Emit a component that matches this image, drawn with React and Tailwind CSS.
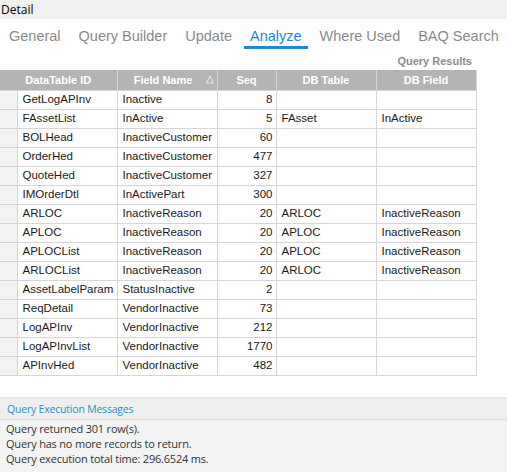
const rows = [
  ["GetLogAPInv", "Inactive", "8", "", ""],
  ["FAssetList", "InActive", "5", "FAsset", "InActive"],
  ["BOLHead", "InactiveCustomer", "60", "", ""],
  ["OrderHed", "InactiveCustomer", "477", "", ""],
  ["QuoteHed", "InactiveCustomer", "327", "", ""],
  ["IMOrderDtl", "InActivePart", "300", "", ""],
  ["ARLOC", "InactiveReason", "20", "ARLOC", "InactiveReason"],
  ["APLOC", "InactiveReason", "20", "APLOC", "InactiveReason"],
  ["APLOCList", "InactiveReason", "20", "APLOC", "InactiveReason"],
  ["ARLOCList", "InactiveReason", "20", "ARLOC", "InactiveReason"],
  ["AssetLabelParam", "StatusInactive", "2", "", ""],
  ["ReqDetail", "VendorInactive", "73", "", ""],
  ["LogAPInv", "VendorInactive", "212", "", ""],
  ["LogAPInvList", "VendorInactive", "1770", "", ""],
  ["APInvHed", "VendorInactive", "482", "", ""],
];

const tabs = ["General", "Query Builder", "Update", "Analyze", "Where Used", "BAQ Search"];

export default function App() {
  return (
    <div className="w-[507px] h-[472px] bg-white flex flex-col overflow-hidden font-['Liberation_Sans',Arial,sans-serif]">
      <div className="h-[19px] bg-[#f0f0f0] px-[1px] text-[12px] leading-[19px] text-black font-['Open_Sans',sans-serif]">
        Detail
      </div>

      <div className="flex gap-[6px] pl-[3px] pt-[6px] h-[30px] whitespace-nowrap">
        {tabs.map((t) => (
          <div
            key={t}
            className={`px-[6px] text-[14.5px] leading-[22px] h-[24px] ${
              t === "Analyze"
                ? "text-[#1e88d8] border-b-[3px] border-[#1e88d8]"
                : "text-[#8a8a8a]"
            }`}
          >
            {t}
          </div>
        ))}
      </div>

      <div className="w-[475px] flex justify-end pr-[3px] pt-[3px] h-[21px] items-center">
        <span className="text-[11px] font-bold text-[#8c8c8c]">Query Results</span>
      </div>

      <table className="border-collapse text-[11.5px] text-[#1a1a1a] table-fixed w-[476px]">
        <colgroup>
          <col className="w-[17px]" />
          <col className="w-[100px]" />
          <col className="w-[100px]" />
          <col className="w-[59px]" />
          <col className="w-[100px]" />
          <col className="w-[100px]" />
        </colgroup>
        <thead>
          <tr className="h-[20px] bg-[#b4b4b4] text-white font-bold text-[11px]">
            <th colSpan={2} className="border-r border-[#d6d6d6] font-bold">DataTable ID</th>
            <th className="border-r border-[#d6d6d6] font-bold relative pr-[8px]">
              Field Name
              <span className="absolute right-[3px] top-[1px] text-[10px] font-normal">△</span>
            </th>
            <th className="border-r border-[#d6d6d6] font-bold">Seq</th>
            <th className="border-r border-[#d6d6d6] font-bold">DB Table</th>
            <th className="border-r border-[#d6d6d6] font-bold">DB Field</th>
          </tr>
        </thead>
        <tbody>
          {rows.map((r) => (
            <tr key={r[0]} className="h-[19px]">
              <td className="bg-[#f3f3f3] border border-[#d6d6d6] border-l-0"></td>
              <td className="border border-[#d6d6d6] px-[5px] whitespace-nowrap overflow-hidden">{r[0]}</td>
              <td className="border border-[#d6d6d6] px-[5px] whitespace-nowrap overflow-hidden">{r[1]}</td>
              <td className="border border-[#d6d6d6] px-[3px] text-right">{r[2]}</td>
              <td className="border border-[#d6d6d6] px-[5px]">{r[3]}</td>
              <td className="border border-[#d6d6d6] px-[5px]">{r[4]}</td>
            </tr>
          ))}
        </tbody>
      </table>

      <div className="flex-1" />

      <div className="h-[75px] border-t-2 border-[#e8e8e8] flex flex-col font-['Open_Sans',sans-serif]">
        <div className="h-[21px] bg-[#efefef] border-b border-[#dadada] px-[7px] text-[10.5px] tracking-[-0.2px] leading-[20px] text-[#2a8fc4]">
          Query Execution Messages
        </div>
        <div className="flex-1 bg-[#f3f3f3] px-[6px] pt-[1px] text-[11px] tracking-[-0.2px] leading-[15px] text-[#333]">
          <div>Query returned 301 row(s).</div>
          <div>Query has no more records to return.</div>
          <div>Query execution total time: 296.6524 ms.</div>
        </div>
      </div>
    </div>
  );
}
